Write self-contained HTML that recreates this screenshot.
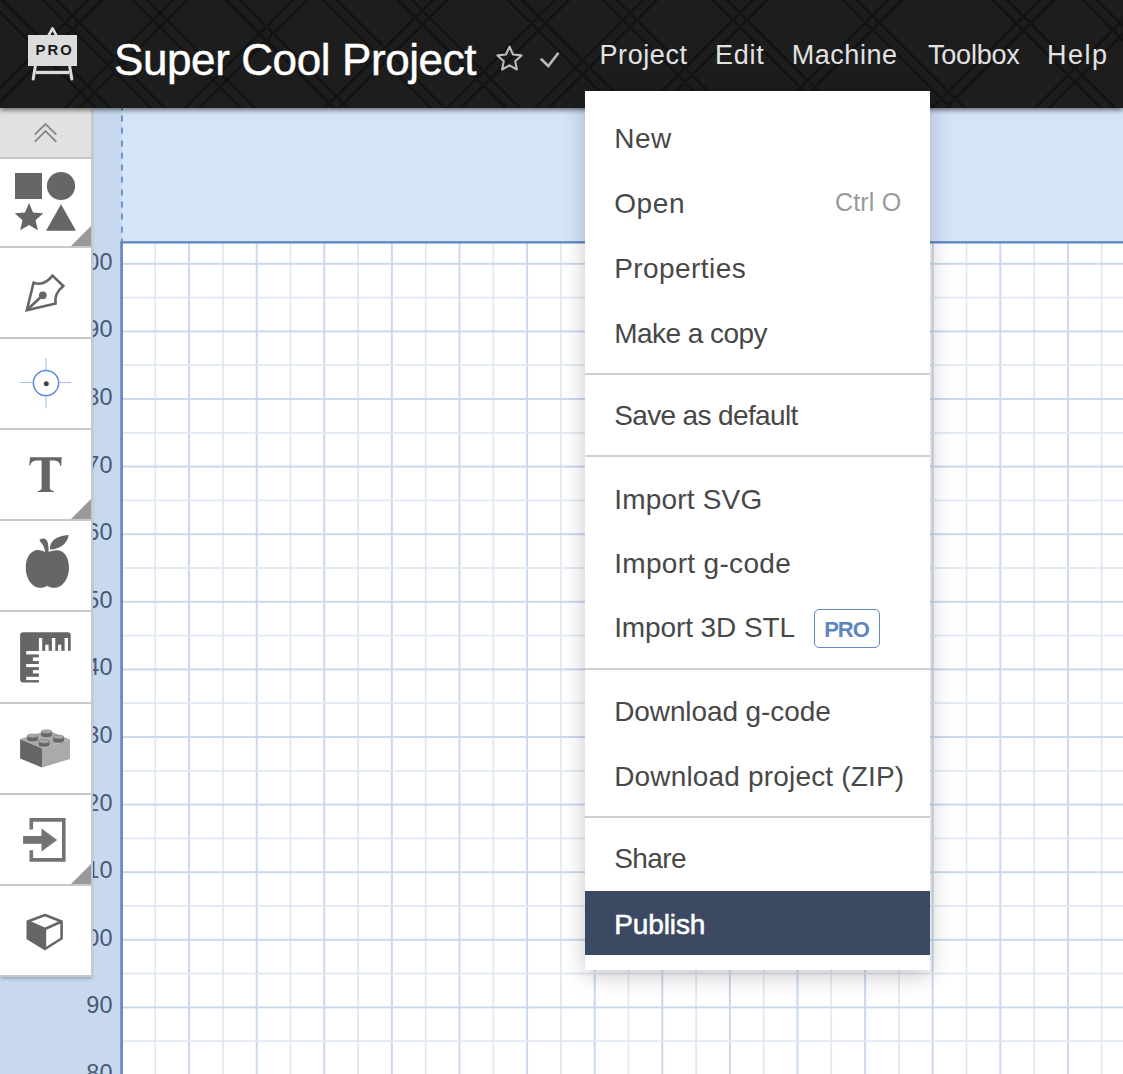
<!DOCTYPE html><html><head><meta charset="utf-8"><style>
*{margin:0;padding:0;box-sizing:border-box}
html,body{width:1123px;height:1074px;overflow:hidden;background:#c8d9ef;font-family:"Liberation Sans",sans-serif}
.abs{position:absolute}
.lbl{position:absolute;left:0;width:112.5px;font-size:23.5px;color:#4a5a75;line-height:20px;text-align:right;white-space:nowrap}
.t{position:absolute;white-space:nowrap;line-height:1}
.sep{position:absolute;left:0;width:91px;height:2px;background:#c8c8c8}
.corner{position:absolute;left:71px;width:0;height:0;border-style:solid;border-width:0 0 20px 20px;border-color:transparent transparent #999 transparent}
.mi{position:absolute;left:29.2px;font-size:28px;color:#484848;white-space:nowrap;line-height:1}
.msep{position:absolute;left:0;width:345px;height:2px;background:#d0d0d0}
</style></head><body>
<div class="abs" style="left:93px;top:108px;width:29px;height:966px;background:#c8d9ef"></div>
<div class="abs" style="left:122px;top:108px;width:1001px;height:134px;background:#d4e4f9"></div>
<div class="abs" style="left:122px;top:242px;width:1001px;height:832px;background:#fff"></div>
<svg class="abs" style="left:0;top:0" width="1123" height="1074"><rect x="154.45" y="242" width="1.7" height="832" fill="#e0e8f4"/>
<rect x="188.10" y="242" width="2.0" height="832" fill="#cbd9ed"/>
<rect x="222.05" y="242" width="1.7" height="832" fill="#e0e8f4"/>
<rect x="255.70" y="242" width="2.0" height="832" fill="#cbd9ed"/>
<rect x="289.65" y="242" width="1.7" height="832" fill="#e0e8f4"/>
<rect x="323.30" y="242" width="2.0" height="832" fill="#cbd9ed"/>
<rect x="357.25" y="242" width="1.7" height="832" fill="#e0e8f4"/>
<rect x="390.90" y="242" width="2.0" height="832" fill="#cbd9ed"/>
<rect x="424.85" y="242" width="1.7" height="832" fill="#e0e8f4"/>
<rect x="458.50" y="242" width="2.0" height="832" fill="#cbd9ed"/>
<rect x="492.45" y="242" width="1.7" height="832" fill="#e0e8f4"/>
<rect x="526.10" y="242" width="2.0" height="832" fill="#cbd9ed"/>
<rect x="560.05" y="242" width="1.7" height="832" fill="#e0e8f4"/>
<rect x="593.70" y="242" width="2.0" height="832" fill="#cbd9ed"/>
<rect x="627.65" y="242" width="1.7" height="832" fill="#e0e8f4"/>
<rect x="661.30" y="242" width="2.0" height="832" fill="#cbd9ed"/>
<rect x="695.25" y="242" width="1.7" height="832" fill="#e0e8f4"/>
<rect x="728.90" y="242" width="2.0" height="832" fill="#cbd9ed"/>
<rect x="762.85" y="242" width="1.7" height="832" fill="#e0e8f4"/>
<rect x="796.50" y="242" width="2.0" height="832" fill="#cbd9ed"/>
<rect x="830.45" y="242" width="1.7" height="832" fill="#e0e8f4"/>
<rect x="864.10" y="242" width="2.0" height="832" fill="#cbd9ed"/>
<rect x="898.05" y="242" width="1.7" height="832" fill="#e0e8f4"/>
<rect x="931.70" y="242" width="2.0" height="832" fill="#cbd9ed"/>
<rect x="965.65" y="242" width="1.7" height="832" fill="#e0e8f4"/>
<rect x="999.30" y="242" width="2.0" height="832" fill="#cbd9ed"/>
<rect x="1033.25" y="242" width="1.7" height="832" fill="#e0e8f4"/>
<rect x="1066.90" y="242" width="2.0" height="832" fill="#cbd9ed"/>
<rect x="1100.85" y="242" width="1.7" height="832" fill="#e0e8f4"/>
<rect x="122" y="262.80" width="1001" height="2.0" fill="#cbd9ed"/>
<rect x="122" y="296.75" width="1001" height="1.7" fill="#e0e8f4"/>
<rect x="122" y="330.40" width="1001" height="2.0" fill="#cbd9ed"/>
<rect x="122" y="364.35" width="1001" height="1.7" fill="#e0e8f4"/>
<rect x="122" y="398.00" width="1001" height="2.0" fill="#cbd9ed"/>
<rect x="122" y="431.95" width="1001" height="1.7" fill="#e0e8f4"/>
<rect x="122" y="465.60" width="1001" height="2.0" fill="#cbd9ed"/>
<rect x="122" y="499.55" width="1001" height="1.7" fill="#e0e8f4"/>
<rect x="122" y="533.20" width="1001" height="2.0" fill="#cbd9ed"/>
<rect x="122" y="567.15" width="1001" height="1.7" fill="#e0e8f4"/>
<rect x="122" y="600.80" width="1001" height="2.0" fill="#cbd9ed"/>
<rect x="122" y="634.75" width="1001" height="1.7" fill="#e0e8f4"/>
<rect x="122" y="668.40" width="1001" height="2.0" fill="#cbd9ed"/>
<rect x="122" y="702.35" width="1001" height="1.7" fill="#e0e8f4"/>
<rect x="122" y="736.00" width="1001" height="2.0" fill="#cbd9ed"/>
<rect x="122" y="769.95" width="1001" height="1.7" fill="#e0e8f4"/>
<rect x="122" y="803.60" width="1001" height="2.0" fill="#cbd9ed"/>
<rect x="122" y="837.55" width="1001" height="1.7" fill="#e0e8f4"/>
<rect x="122" y="871.20" width="1001" height="2.0" fill="#cbd9ed"/>
<rect x="122" y="905.15" width="1001" height="1.7" fill="#e0e8f4"/>
<rect x="122" y="938.80" width="1001" height="2.0" fill="#cbd9ed"/>
<rect x="122" y="972.75" width="1001" height="1.7" fill="#e0e8f4"/>
<rect x="122" y="1006.40" width="1001" height="2.0" fill="#cbd9ed"/>
<rect x="122" y="1040.35" width="1001" height="1.7" fill="#e0e8f4"/>
<rect x="122" y="1074.00" width="1001" height="2.0" fill="#cbd9ed"/><rect x="120.3" y="241.2" width="2.6" height="833" fill="#5d87c3"/><rect x="120.3" y="241.2" width="1003" height="2.3" fill="#5d87c3"/></svg>
<div class="abs" style="left:120.5px;top:108px;width:2px;height:134px;background:repeating-linear-gradient(to bottom,#6f96cc 0 6px,transparent 6px 12.3px);background-position:0 7.6px"></div>
<div class="lbl" style="top:251.8px">200</div>
<div class="lbl" style="top:319.4px">190</div>
<div class="lbl" style="top:387.0px">180</div>
<div class="lbl" style="top:454.6px">170</div>
<div class="lbl" style="top:522.2px">160</div>
<div class="lbl" style="top:589.8px">150</div>
<div class="lbl" style="top:657.4px">140</div>
<div class="lbl" style="top:725.0px">130</div>
<div class="lbl" style="top:792.6px">120</div>
<div class="lbl" style="top:860.2px">110</div>
<div class="lbl" style="top:927.8px">100</div>
<div class="lbl" style="top:995.4px">90</div>
<div class="lbl" style="top:1063.0px">80</div>
<div class="abs" style="left:0;top:108px;width:93px;height:869px;background:#fff;border-right:2px solid #c8c8c8;border-bottom:2px solid #c8c8c8;box-shadow:0 3px 3px -1px rgba(60,80,110,.35)">
<div class="abs" style="left:0;top:0;width:91px;height:49px;background:#e1e1e1"></div>
<div class="sep" style="top:49px"></div>
<div class="sep" style="top:138px"></div>
<div class="sep" style="top:229px"></div>
<div class="sep" style="top:320px"></div>
<div class="sep" style="top:411px"></div>
<div class="sep" style="top:502px"></div>
<div class="sep" style="top:594px"></div>
<div class="sep" style="top:685px"></div>
<div class="sep" style="top:776px"></div>
<div class="corner" style="top:118px"></div>
<div class="corner" style="top:391px"></div>
<div class="corner" style="top:756px"></div>
</div>
<svg class="abs" style="left:0;top:0" width="93" height="1074"><path d="M34.7,134.7 L45.5,124 L56.3,134.7 M34.7,141.8 L45.5,131.1 L56.3,141.8" fill="none" stroke="#888" stroke-width="1.9"/><rect x="15" y="173" width="27" height="26" fill="#666"/><circle cx="61" cy="186" r="14.1" fill="#666"/><polygon points="29.00,203.00 33.06,212.42 43.27,213.36 35.56,220.13 37.82,230.14 29.00,224.90 20.18,230.14 22.44,220.13 14.73,213.36 24.94,212.42" fill="#666"/><polygon points="46,230.8 76,230.8 61,204.2" fill="#666"/><path d="M26.8,310.3 L33.6,282.8 Q44,286.5 52.5,275.6 L63.3,286 Q54,293.5 55.6,303.6 Z" fill="none" stroke="#666" stroke-width="2.6" stroke-linejoin="miter"/><path d="M27.5,309.5 L42.5,295.5" stroke="#666" stroke-width="2.6"/><circle cx="42.8" cy="295.3" r="3.9" fill="#666"/><path d="M20.3,382.5 L33.5,382.5 M58.5,382.5 L70.9,382.5 M46,358.1 L46,370.5 M46,395.5 L46,408.6" stroke="#a9c0ec" stroke-width="1.1"/><circle cx="46" cy="383" r="12.6" fill="none" stroke="#5b8ade" stroke-width="1.5"/><circle cx="46.3" cy="383.8" r="2.5" fill="#444"/><path d="M30,457.3 L61.7,457.3 L61.2,466 L60.3,466 Q59.5,461 54.5,460.6 L49.8,460.6 L49.8,488 Q50.3,490.6 54,491 L54,492 L37.8,492 L37.8,491 Q41.3,490.6 41.6,488 L41.6,460.6 L36.2,460.6 Q31,461 30.2,465.5 L29.2,465.5 Z" fill="#666"/><path d="M46.6,552.8 C42,550 38,549.5 35,550.5 C28,553 25.5,561 25.8,569 C26,578 31,585 36,587 C40,588.5 44,588 47.2,585.8 C50.5,588 54.5,588.5 58.5,587 C64,585 69,577 69,568 C69,560 66,552 59,550.5 C55.5,549.8 51,550.5 46.6,552.8 Z" fill="#666"/><path d="M39.4,540.6 Q40.5,538 44,538.6 Q47.8,539.6 48.4,546 L48.7,553 L45.3,553 Q44.8,546 39.4,540.6 Z" fill="#666"/><path d="M50,549.6 Q49.2,536.5 68.8,535 Q66,548.5 50,549.6 Z" fill="#666"/><path d="M23.1,632.3 L67.7,632.3 Q70.7,632.3 70.7,635.3 L70.7,650.7 L38.9,650.7 L38.9,682.5 L23.1,682.5 Q20.1,682.5 20.1,679.5 L20.1,635.3 Q20.1,632.3 23.1,632.3 Z" fill="#666"/><rect x="38.9" y="638" width="3.3" height="12.8" fill="#fff"/><rect x="45.3" y="644.7" width="3.3" height="6.1" fill="#fff"/><rect x="51.9" y="638" width="3.4" height="12.8" fill="#fff"/><rect x="58" y="644.7" width="3.3" height="6.1" fill="#fff"/><rect x="64.6" y="638" width="3.4" height="12.8" fill="#fff"/><rect x="26.2" y="651" width="12.8" height="3.4" fill="#fff"/><rect x="32.9" y="657.4" width="6.1" height="3.6" fill="#fff"/><rect x="26.2" y="664" width="12.8" height="3.1" fill="#fff"/><rect x="32.9" y="670.1" width="6.1" height="3.3" fill="#fff"/><rect x="26.2" y="676.8" width="12.8" height="3.3" fill="#fff"/><polygon points="20.1,739 42,748.3 42,767.5 20.1,758.5" fill="#666"/><polygon points="42,748.3 70,739.5 70,759 42,767.5" fill="#aaa"/><polygon points="20.1,739 42,748.3 70,739.5 48,730.2" fill="#aaa"/><path d="M41.1,731.6 L41.1,735.0 A5.4,2 0 0 0 51.9,735.0 L51.9,731.6 Z" fill="#666"/><ellipse cx="46.5" cy="731.6" rx="5.4" ry="1.9" fill="#a6a6a6" stroke="#7a7a7a" stroke-width="0.5"/><path d="M27.1,735.8 L27.1,739.1999999999999 A5.4,2 0 0 0 37.9,739.1999999999999 L37.9,735.8 Z" fill="#666"/><ellipse cx="32.5" cy="735.8" rx="5.4" ry="1.9" fill="#a6a6a6" stroke="#7a7a7a" stroke-width="0.5"/><path d="M53.1,737 L53.1,740.4 A5.4,2 0 0 0 63.9,740.4 L63.9,737 Z" fill="#666"/><ellipse cx="58.5" cy="737" rx="5.4" ry="1.9" fill="#a6a6a6" stroke="#7a7a7a" stroke-width="0.5"/><path d="M38.7,741.3 L38.7,744.6999999999999 A5.4,2 0 0 0 49.5,744.6999999999999 L49.5,741.3 Z" fill="#666"/><ellipse cx="44.1" cy="741.3" rx="5.4" ry="1.9" fill="#a6a6a6" stroke="#7a7a7a" stroke-width="0.5"/><path d="M31.3,829.6 L31.3,819.9 L63.8,819.9 L63.8,859.9 L31.3,859.9 L31.3,850.2" fill="none" stroke="#737373" stroke-width="3.6" stroke-linejoin="miter"/><rect x="23.1" y="836" width="19" height="7.8" fill="#737373"/><polygon points="41.5,828.4 57.2,840 41.5,851.6" fill="#737373"/><polygon points="27.8,921.5 44.9,929 44.9,949 27.8,938.5" fill="#666"/><path d="M44.9,915 L61.6,921.5 L61.6,938.5 L44.9,949 L27.8,938.5 L27.8,921.5 Z M27.8,921.5 L44.9,929 L61.6,921.5 M44.9,929 L44.9,949" fill="none" stroke="#666" stroke-width="2.6" stroke-linejoin="round"/></svg>
<div class="abs" style="left:0;top:0;width:1123px;height:108px;background:#1d1d1d;box-shadow:0 2px 5px rgba(0,0,0,.55);overflow:hidden">
<svg class="abs" style="left:0;top:0" width="1123" height="108"><defs><filter id="bl" x="-5%" y="-5%" width="110%" height="110%"><feGaussianBlur stdDeviation="0.7"/></filter></defs><g stroke="#141414" stroke-width="2" filter="url(#bl)"><line x1="-32" y1="120" x2="98" y2="-10"/><line x1="-18" y1="120" x2="112" y2="-10"/><line x1="53" y1="120" x2="183" y2="-10"/><line x1="67" y1="120" x2="197" y2="-10"/><line x1="173" y1="120" x2="303" y2="-10"/><line x1="187" y1="120" x2="317" y2="-10"/><line x1="313" y1="120" x2="443" y2="-10"/><line x1="327" y1="120" x2="457" y2="-10"/><line x1="435" y1="120" x2="565" y2="-10"/><line x1="449" y1="120" x2="579" y2="-10"/><line x1="523" y1="120" x2="653" y2="-10"/><line x1="537" y1="120" x2="667" y2="-10"/><line x1="633" y1="120" x2="763" y2="-10"/><line x1="647" y1="120" x2="777" y2="-10"/><line x1="768" y1="120" x2="898" y2="-10"/><line x1="782" y1="120" x2="912" y2="-10"/><line x1="920" y1="120" x2="1050" y2="-10"/><line x1="934" y1="120" x2="1064" y2="-10"/><line x1="1023" y1="120" x2="1153" y2="-10"/><line x1="1037" y1="120" x2="1167" y2="-10"/><line x1="-22" y1="-10" x2="108" y2="120"/><line x1="-8" y1="-10" x2="122" y2="120"/><line x1="33" y1="-10" x2="163" y2="120"/><line x1="47" y1="-10" x2="177" y2="120"/><line x1="123" y1="-10" x2="253" y2="120"/><line x1="137" y1="-10" x2="267" y2="120"/><line x1="216" y1="-10" x2="346" y2="120"/><line x1="230" y1="-10" x2="360" y2="120"/><line x1="313" y1="-10" x2="443" y2="120"/><line x1="327" y1="-10" x2="457" y2="120"/><line x1="388" y1="-10" x2="518" y2="120"/><line x1="402" y1="-10" x2="532" y2="120"/><line x1="498" y1="-10" x2="628" y2="120"/><line x1="512" y1="-10" x2="642" y2="120"/><line x1="593" y1="-10" x2="723" y2="120"/><line x1="607" y1="-10" x2="737" y2="120"/><line x1="703" y1="-10" x2="833" y2="120"/><line x1="717" y1="-10" x2="847" y2="120"/><line x1="833" y1="-10" x2="963" y2="120"/><line x1="847" y1="-10" x2="977" y2="120"/><line x1="983" y1="-10" x2="1113" y2="120"/><line x1="997" y1="-10" x2="1127" y2="120"/><line x1="1073" y1="-10" x2="1203" y2="120"/><line x1="1087" y1="-10" x2="1217" y2="120"/></g><rect x="28" y="35" width="49" height="31" fill="#dcdcdc"/><path d="M48.6,35.5 L52.5,28.4 L56.4,35.5" fill="none" stroke="#dcdcdc" stroke-width="2.6" stroke-linejoin="round"/><path d="M35.5,65 L33.2,79" stroke="#dcdcdc" stroke-width="3" stroke-linecap="round"/><path d="M69.5,65 L71.8,79" stroke="#dcdcdc" stroke-width="3" stroke-linecap="round"/><rect x="36" y="70.8" width="33" height="3.3" fill="#dcdcdc"/><polygon points="509.50,46.70 513.03,54.45 521.48,55.41 515.21,61.15 516.91,69.49 509.50,65.30 502.09,69.49 503.79,61.15 497.52,55.41 505.97,54.45" fill="none" stroke="#bbb" stroke-width="2.1" stroke-linejoin="round"/><path d="M540.8,58.8 L548.3,66 L558.5,52.8" fill="none" stroke="#bbb" stroke-width="2.6"/></svg>
<div class="t m" style="left:114px;top:38.2px;font-size:44px;letter-spacing:-0.4px;color:#fff;-webkit-text-stroke:0.45px #fff">Super Cool Project</div>
<div class="t" style="left:35.5px;top:43px;font-size:14.8px;font-weight:bold;letter-spacing:2.1px;color:#1a1a1a">PRO</div>
<div class="t m" style="left:599.5px;top:41.7px;font-size:27px;letter-spacing:0.57px;color:#e2e2e2">Project</div>
<div class="t m" style="left:715px;top:41.7px;font-size:27px;letter-spacing:0.77px;color:#e2e2e2">Edit</div>
<div class="t m" style="left:791.7px;top:41.7px;font-size:27px;letter-spacing:0.55px;color:#e2e2e2">Machine</div>
<div class="t m" style="left:928px;top:41.7px;font-size:27px;letter-spacing:-0.2px;color:#e2e2e2">Toolbox</div>
<div class="t m" style="left:1047px;top:41.7px;font-size:27px;letter-spacing:1.5px;color:#e2e2e2">Help</div>
</div>
<div class="abs" style="left:585px;top:91px;width:345px;height:879px;background:#fff;box-shadow:0 5px 22px rgba(0,0,0,.22)">
<div class="abs" style="left:0;top:800px;width:345px;height:64px;background:#3b4a62"></div>
<div class="mi m" style="top:33.8px;letter-spacing:0.55px">New</div>
<div class="mi m" style="top:98.8px;letter-spacing:0.6px">Open</div>
<div class="mi m" style="top:163.8px;letter-spacing:0.44px">Properties</div>
<div class="mi m" style="top:228.5px;letter-spacing:-0.54px">Make a copy</div>
<div class="mi m" style="top:311.4px;letter-spacing:-0.64px">Save as default</div>
<div class="mi m" style="top:394.5px;letter-spacing:0.19px">Import SVG</div>
<div class="mi m" style="top:458.7px;letter-spacing:0.32px">Import g-code</div>
<div class="mi m" style="top:522.8px;letter-spacing:-0.1px">Import 3D STL</div>
<div class="mi m" style="top:607.1px;letter-spacing:-0.1px">Download g-code</div>
<div class="mi m" style="top:672.1px;letter-spacing:0.17px">Download project (ZIP)</div>
<div class="mi m" style="top:754.4px;letter-spacing:-0.6px">Share</div>
<div class="mi m" style="top:819.8px;color:#fff;letter-spacing:-0.1px;-webkit-text-stroke:0.55px #fff">Publish</div>
<div class="t m" style="left:250px;top:99.0px;font-size:25px;letter-spacing:0.16px;color:#9a9a9a">Ctrl O</div>
<div class="msep" style="top:282px"></div>
<div class="msep" style="top:364px"></div>
<div class="msep" style="top:577px"></div>
<div class="msep" style="top:725px"></div>
<div class="abs" style="left:229.2px;top:518px;width:65.8px;height:39px;border:1.9px solid #5f87c3;border-radius:5px"></div>
<div class="t m" style="left:239.3px;top:528.3px;font-size:22px;font-weight:bold;letter-spacing:-1.1px;color:#5f85c0">PRO</div>
</div>
</body></html>
